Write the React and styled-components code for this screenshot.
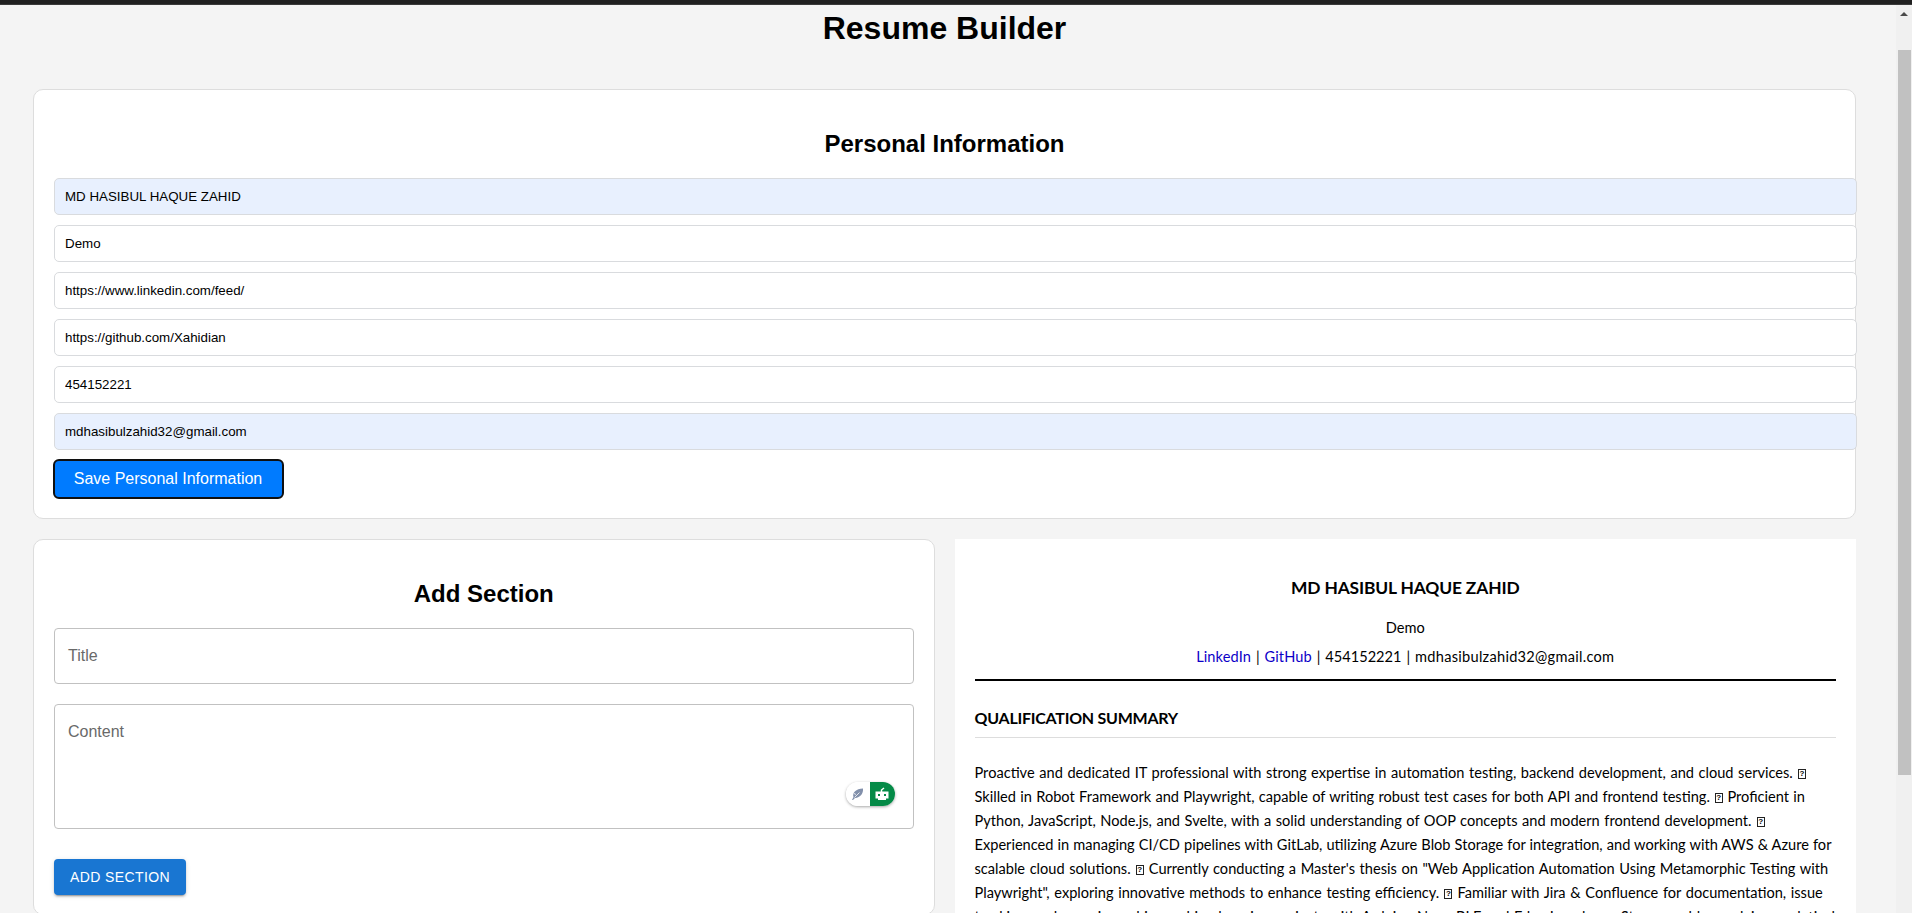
import React from 'react';
import styled, { createGlobalStyle } from 'styled-components';

const Global = createGlobalStyle`
  * { box-sizing: border-box; }
  html, body { margin: 0; height: 100%; overflow: hidden; background: #f4f4f4; }
  body { font-family: "Liberation Sans", Arial, sans-serif; color: #000; }
`;
const Window = styled.div`
  height: 913px; overflow: hidden; display: flex; flex-direction: column;
`;
const TopStrip = styled.div`
  flex: 0 0 5px; background: #202020; border-bottom: 1px solid #3a3a3a;
`;
const Viewport = styled.div`
  flex: 1; min-height: 0; display: flex;
`;
const Page = styled.main`
  flex: 1; min-width: 0; overflow: hidden; padding: 5px 40px 0 33px;
`;
const PageTitle = styled.h1`
  margin: 0 0 42px; font-size: 32px; line-height: 37px; text-align: center;
`;
const Card = styled.section`
  background: #fff; border: 1px solid #ddd; border-radius: 10px; padding: 40px 20px 20px;
  height: ${p => p.$height}px;
`;
const CardTitle = styled.h2`
  margin: 0; font-size: 24px; line-height: 28px; text-align: center;
`;
const Fields = styled.div`
  display: flex; flex-direction: column; gap: 10px; width: calc(100% + 22px);
  margin: 20px 0 10px;
`;
const Field = styled.input`
  display: block; height: 37px; padding: 0 10px; border: 1px solid #d9dbde; border-radius: 5px;
  background: ${p => (p.$filled ? '#e8f0fe' : '#fff')};
  font: 13.333px "Liberation Sans", Arial, sans-serif; color: #000; outline: none;
`;
const SaveButton = styled.button`
  display: block; margin: 0; height: 38px; width: 229px; padding: 0 1px 0 0; border: 0; border-radius: 5px;
  background: #007bff; color: #fff; font: 16px "Liberation Sans", Arial, sans-serif;
  outline: 2px solid #101010; outline-offset: -1px;
`;
const Columns = styled.div`
  display: grid; grid-template-columns: 1fr 1fr; gap: 20px; margin-top: 20px; align-items: start;
`;
const Outlined = styled.div`
  height: ${p => p.$height}px; margin-top: 20px; padding: 15px 13px; border: 1px solid #c1c1c1;
  border-radius: 4px; color: #696969; font-size: 16px; line-height: 23px;
  display: flex; justify-content: space-between;
`;
const AssistPill = styled.div`
  align-self: flex-end; display: flex; width: 49px; height: 24px; margin: 0 5px 7px 0;
  border-radius: 12px; overflow: hidden; background: #fff; box-shadow: 0 1px 3px rgba(0,0,0,.35);
`;
const PillHalf = styled.span`
  flex: 1; display: flex; align-items: center; justify-content: center;
  background: ${p => (p.$active ? '#048a47' : '#fff')};
`;
const AddButton = styled.button`
  display: block; margin: 30px 0 0; width: 132px; height: 36px; padding: 0; border: 0; border-radius: 4px;
  background: #1976d2; color: #fff; font: 500 14px "Liberation Sans", Arial, sans-serif; letter-spacing: .4px;
  box-shadow: 0 3px 1px -2px rgba(0,0,0,.2), 0 2px 2px rgba(0,0,0,.14), 0 1px 5px rgba(0,0,0,.12);
`;
const Resume = styled.article`
  height: 500px; padding: 36px 20px 0; background: #fff; font-family: Lato, "Open Sans", sans-serif;
`;
const ResumeName = styled.h2`
  margin: 0; text-align: center; font-size: 17.4px; line-height: 26px; letter-spacing: -.15px;
`;
const Role = styled.p`
  margin: 15px 0 0; text-align: center; font-size: 14.6px; line-height: 24px;
`;
const Contacts = styled.p`
  margin: 5px 0 0; padding-bottom: 10px; border-bottom: 2px solid #000;
  text-align: center; font-size: 14.6px; line-height: 24px; white-space: nowrap; word-spacing: 1.2px;
`;
const Link = styled.a`
  color: #0c00c8; text-decoration: none; letter-spacing: .1px;
`;
const Email = styled.span`
  letter-spacing: .27px;
`;
const SectionTitle = styled.h3`
  margin: 24px 0 23px; padding-bottom: 6px; border-bottom: 1px solid #ddd;
  font-size: 16px; line-height: 26px; letter-spacing: -.25px;
`;
const Summary = styled.div`
  font-size: 14.6px; line-height: 24px; white-space: nowrap;
`;
const Line = styled.div`
  height: 24px; word-spacing: ${p => p.$gap}px;
`;
const Missing = styled.span`
  display: inline-flex; align-items: center; justify-content: center; width: 8px; height: 10px;
  margin: 0 .5px; border: 1px solid #222; font: bold 8px/8px "Liberation Sans", sans-serif;
  vertical-align: 2px;
`;
const Scrollbar = styled.div`
  flex: 0 0 16px; display: flex; flex-direction: column; align-items: center; background: #f0f0f0;
`;
const ArrowUp = styled.div`
  width: 0; height: 0; margin: 7px 0 34px; border: 4px solid transparent; border-top: 0;
  border-bottom: 4px solid #4a4a4a;
`;
const Thumb = styled.div`
  width: 13px; height: 725px; background: #c1c1c1;
`;

const fields = [
  ['MD HASIBUL HAQUE ZAHID', true],
  ['Demo', false],
  ['https://www.linkedin.com/feed/', false],
  ['https://github.com/Xahidian', false],
  ['454152221', false],
  ['mdhasibulzahid32@gmail.com', true],
];
const summary = [
  ['Proactive and dedicated IT professional with strong expertise in automation testing, backend development, and cloud services. □', 0.85],
  ['Skilled in Robot Framework and Playwright, capable of writing robust test cases for both API and frontend testing. □ Proficient in', 0.58],
  ['Python, JavaScript, Node.js, and Svelte, with a solid understanding of OOP concepts and modern frontend development. □', 0.8],
  ['Experienced in managing CI/CD pipelines with GitLab, utilizing Azure Blob Storage for integration, and working with AWS & Azure for', 0.33],
  ['scalable cloud solutions. □ Currently conducting a Master\'s thesis on "Web Application Automation Using Metamorphic Testing with', 0.85],
  ['Playwright", exploring innovative methods to enhance testing efficiency. □ Familiar with Jira & Confluence for documentation, issue', 0.9],
  ['tracking, and experienced in machine learning projects with Arduino Nano BLE and Edge Impulse. □ Strong problem-solving analytical', 0.7],
];
const withBoxes = text => text.split('□').flatMap((part, i) => (i ? [<Missing key={i}>?</Missing>, part] : [part]));

export default function App() {
  return (
    <Window>
      <Global />
      <TopStrip />
      <Viewport>
        <Page>
          <PageTitle>Resume Builder</PageTitle>
          <Card $height={430}>
            <CardTitle>Personal Information</CardTitle>
            <Fields>
              {fields.map(([v, f]) => <Field key={v} defaultValue={v} $filled={f} />)}
            </Fields>
            <SaveButton>Save Personal Information</SaveButton>
          </Card>
          <Columns>
            <Card $height={376}>
              <CardTitle>Add Section</CardTitle>
              <Outlined $height={56}>Title</Outlined>
              <Outlined $height={125}>
                Content
                <AssistPill>
                  <PillHalf>
                    <svg width="13" height="14" viewBox="0 0 13 14"><path d="M1 13 2.500 10C1 6 5 1.500 12 1.500c.5 5-2.500 9-8 9.500l-2 2Z" fill="#8290ab" /><path d="m3.500 10.500 5-5M3 6.500l2 1" stroke="#fff" strokeWidth=".8" /></svg>
                  </PillHalf>
                  <PillHalf $active>
                    <svg width="14" height="14" viewBox="0 0 14 14"><path d="M.5 4.500h13v7H11V13H3v-1.500H.5Z" fill="#fff" /><path d="M6.500 5V3l2.500-2" fill="none" stroke="#fff" strokeWidth="1.500" /><path d="M3 7h2v2H3Zm6 0h2v2H9Z" fill="#048a47" /></svg>
                  </PillHalf>
                </AssistPill>
              </Outlined>
              <AddButton>ADD SECTION</AddButton>
            </Card>
            <Resume>
              <ResumeName>MD HASIBUL HAQUE ZAHID</ResumeName>
              <Role>Demo</Role>
              <Contacts><Link>LinkedIn</Link> | <Link>GitHub</Link> | 454152221 | <Email>mdhasibulzahid32@gmail.com</Email></Contacts>
              <SectionTitle>QUALIFICATION SUMMARY</SectionTitle>
              <Summary>
                {summary.map(([t, k]) => <Line key={t} $gap={k}>{withBoxes(t)}</Line>)}
              </Summary>
            </Resume>
          </Columns>
        </Page>
        <Scrollbar><ArrowUp /><Thumb /></Scrollbar>
      </Viewport>
    </Window>
  );
}
